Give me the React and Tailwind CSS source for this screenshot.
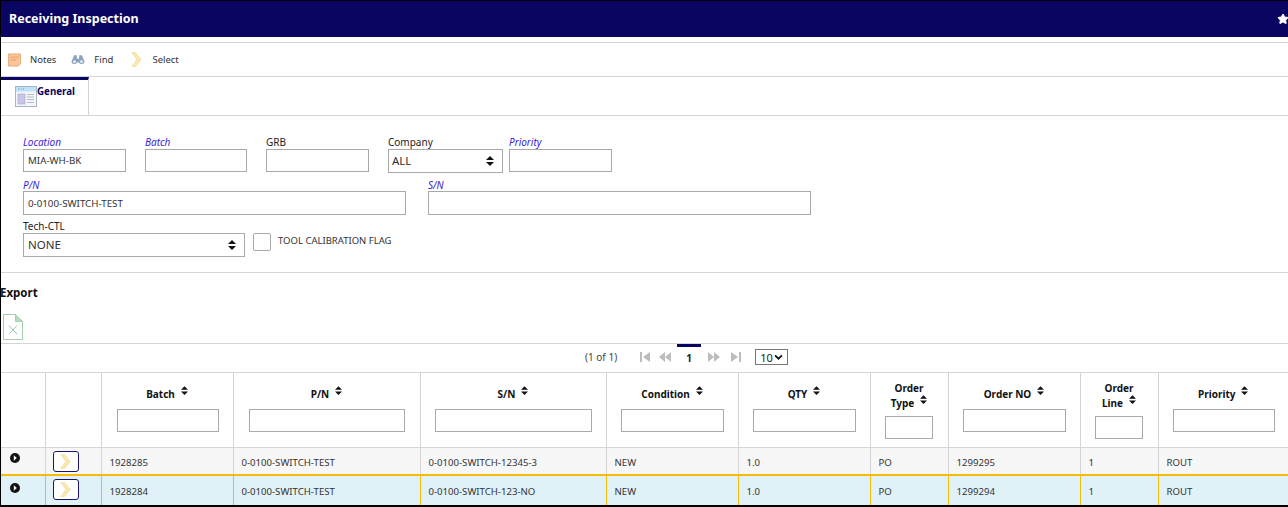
import { Star } from 'lucide-react'

const columns = [
  { w: 'w-[44px]' },
  { w: 'w-[56px]' },
  { w: 'w-[132px]', label: 'Batch', input: 'ml-[2px] w-[102px]' },
  { w: 'w-[187px]', label: 'P/N', input: 'ml-px w-[156px]' },
  { w: 'w-[186px]', label: 'S/N', input: 'w-[157px]' },
  { w: 'w-[132px]', label: 'Condition', input: 'w-[103px]' },
  { w: 'w-[132px]', label: 'QTY', input: 'w-[103px]' },
  { w: 'w-[78px]', label: 'Order', label2: 'Type', input: 'w-[48px]' },
  { w: 'w-[132px]', label: 'Order NO', input: 'w-[103px]' },
  { w: 'w-[78px]', label: 'Order', label2: 'Line', input: 'w-[48px]' },
  { w: 'w-[130px]', label: 'Priority', input: 'ml-[2px] w-[102px]' },
]

const rows = [
  ['1928285', '0-0100-SWITCH-TEST', '0-0100-SWITCH-12345-3', 'NEW', '1.0', 'PO', '1299295', '1', 'ROUT'],
  ['1928284', '0-0100-SWITCH-TEST', '0-0100-SWITCH-123-NO', 'NEW', '1.0', 'PO', '1299294', '1', 'ROUT'],
]

function SortIcon({ className = '' }) {
  return (
    <svg viewBox="0 0 8 10" className={`inline-block h-[9px] w-[7px] ${className}`}>
      <path d="M4 0L8 4H0z M0 6H8L4 10z" fill="#111" />
    </svg>
  )
}

function Chevron({ className = '' }) {
  return (
    <svg viewBox="0 0 12 16" className={className}>
      <path d="M1 0.5H5L11 8L5 15.5H1L6.5 8z" fill="#fce8ad" stroke="#eed690" strokeWidth="0.7" />
    </svg>
  )
}

function Field({ label, italic, value, className, inputClass = 'h-[23px]' }) {
  return (
    <div className={className}>
      <label className={`block h-[13px] text-[10px] leading-[13px] ${italic ? 'italic text-[#3a22d8]' : 'text-[#222]'}`}>{label}</label>
      <input readOnly value={value || ''} className={`block w-full border border-[#a9a9a9] bg-white px-1 text-[9.75px] text-[#333] outline-none ${inputClass}`} />
    </div>
  )
}

function SelectBox({ label, value, className, pad = 'pl-[3px]' }) {
  return (
    <div className={className}>
      <label className="block h-[13px] text-[10px] leading-[13px] text-[#222]">{label}</label>
      <div className={`flex h-[24px] items-center justify-between border border-[#a9a9a9] bg-white pr-2 text-[11.5px] text-[#333] ${pad}`}>
        <span>{value}</span>
        <SortIcon className="!h-[10px] !w-[8px]" />
      </div>
    </div>
  )
}

function PagerIcon({ d, className = '' }) {
  return (
    <svg viewBox="0 0 12 10" className={`h-[10px] w-[12px] ${className}`}>
      <path d={d} fill="#bdbdbd" />
    </svg>
  )
}

export default function App() {
  return (
    <div className="h-[507px] w-[1288px] overflow-hidden border-l border-t border-black bg-white font-['Noto_Sans','Open_Sans',sans-serif] text-[#222]">
      {/* title bar */}
      <div className="flex h-[36px] items-center justify-between bg-[#0a0560] pl-2 text-white">
        <h1 className="text-[12.5px] font-bold">Receiving Inspection</h1>
        <Star className="mr-[-1px] h-[12px] w-[12px] fill-white text-white" />
      </div>

      {/* toolbar */}
      <div className="mt-[5px] flex h-[35px] items-center border-y border-[#d5d5d5] text-[9.5px] text-[#333]">
        <svg viewBox="0 0 14 14" className="ml-[7px] h-[14px] w-[13px]">
          <path d="M0.5 0.5H13.5V11L11 13.5H0.5z" fill="#fbc596" stroke="#e8a877" />
          <path d="M2.5 4H11.5M2.5 7H9" stroke="#e29a66" strokeWidth="1" />
        </svg>
        <span className="ml-[9px] mt-px">Notes</span>
        <svg viewBox="0 0 16 12" className="ml-[15px] h-[11px] w-[14px]">
          <path d="M3.5 1H6.5L7 5H9L9.5 1H12.5L15.5 8.5A3.5 3.5 0 0 1 9 9.5H7A3.5 3.5 0 0 1 0.5 8.5z" fill="#8ea3bd" />
          <circle cx="4" cy="8.6" r="1.7" fill="#e4eaf1" />
          <circle cx="12" cy="8.6" r="1.7" fill="#e4eaf1" />
        </svg>
        <span className="ml-[9px] mt-px">Find</span>
        <Chevron className="ml-[18px] h-[15px] w-[11px]" />
        <span className="ml-[10px] mt-px">Select</span>
      </div>

      {/* tabs */}
      <div className="flex h-[39px] border-b border-[#d5d5d5]">
        <div className="flex w-[88px] border-r border-t-[3px] border-r-[#d5d5d5] border-t-[#0a0560] pl-[14px] pt-[6px]">
          <svg viewBox="0 0 22 22" className="h-[22px] w-[22px]">
            <rect x="0.5" y="0.5" width="21" height="20" fill="#f3f5f8" stroke="#a8b3c4" />
            <rect x="1" y="1" width="20" height="4.5" fill="#bfe2fb" />
            <path d="M3 3H4M5.5 3H6.5M8 3H9" stroke="#7d93ad" strokeWidth="1" />
            <rect x="3" y="8" width="7" height="10" fill="#cbc5e6" stroke="#a9a3cc" strokeWidth="0.6" />
            <path d="M12 8.5H19M12 11H19M12 13.5H19M12 16.5H19" stroke="#b5bcc8" strokeWidth="1" />
          </svg>
          <span className="-mt-px text-[9.75px] font-bold text-[#0a0560]">General</span>
        </div>
      </div>

      {/* search form */}
      <div className="h-[157px] border-b border-[#d5d5d5] pl-[22px] pt-[20px]">
        <div className="flex">
          <Field label="Location" italic value="MIA-WH-BK" className="w-[103px]" />
          <Field label="Batch" italic className="ml-[19px] w-[102px]" />
          <Field label="GRB" className="ml-[19px] w-[103px]" />
          <SelectBox label="Company" value="ALL" className="ml-[19px] w-[115px]" />
          <Field label="Priority" italic className="ml-[6px] w-[103px]" />
        </div>
        <div className="mt-[6px] flex">
          <Field label="P/N" italic value="0-0100-SWITCH-TEST" inputClass="-mt-px h-[24px]" className="w-[383px]" />
          <Field label="S/N" italic inputClass="-mt-px h-[24px]" className="ml-[22px] w-[383px]" />
        </div>
        <div className="mt-[5px] flex">
          <SelectBox label="Tech-CTL" value="NONE" pad="pl-1" className="w-[222px]" />
          <input type="checkbox" readOnly className="ml-[8px] mt-[13px] h-[18px] w-[18px] appearance-none rounded-[2px] border border-[#a9a9a9] bg-white" />
          <span className="ml-[7px] mt-[13px] text-[9.5px] leading-[15px] text-[#333]">TOOL CALIBRATION FLAG</span>
        </div>
      </div>

      {/* export */}
      <div className="h-[71px] border-b border-[#d5d5d5]">
        <div className="-ml-px pt-[12px] text-[11.5px] font-bold leading-[16px] text-[#111]">Export</div>
        <svg viewBox="0 0 20 26" className="ml-[2px] mt-[13px] h-[26px] w-[20px]">
          <path d="M0.5 0.5H12.5L19.5 7.5V25.5H0.5z" fill="#fff" stroke="#a5cdb0" />
          <path d="M12.5 0.5V7.5H19.5z" fill="#b9d9c0" stroke="#a5cdb0" />
          <path d="M6 11.5L14 20M14 11.5L6 20" stroke="#9ec3ab" strokeWidth="1" />
        </svg>
      </div>

      {/* paginator */}
      <div className="flex h-[29px] items-start border-b border-[#d5d5d5] pl-[584px] text-[10px] text-[#444]">
        <span className="mt-[7px] leading-[13px]">(1 of 1)</span>
        <PagerIcon className="ml-[22px] mt-[8px]" d="M1 0H3V10H1z M11 0V10L4 5z" />
        <PagerIcon className="ml-[8px] mt-[8px]" d="M6 0V10L0 5z M12 0V10L6 5z" />
        <div className="ml-[6px] h-[28px] w-[24px] border-t-[3px] border-[#0a0560] pt-[4px] text-center text-[10px] font-bold leading-[14px] text-[#222]">1</div>
        <PagerIcon className="ml-[7px] mt-[8px]" d="M0 0L6 5L0 10z M6 0L12 5L6 10z" />
        <PagerIcon className="ml-[10px] mt-[8px]" d="M1 0L8 5L1 10z M9 0H11V10H9z" />
        <div className="ml-[13px] mt-[5px] flex h-[16px] w-[33px] items-center justify-between border border-[#777] px-1 text-[11px] leading-none text-[#222]">
          <span>10</span>
          <svg viewBox="0 0 10 7" className="h-[6px] w-[9px]">
            <path d="M1 1.5L5 5.5L9 1.5" fill="none" stroke="#111" strokeWidth="2" />
          </svg>
        </div>
      </div>

      {/* results table */}
      <table className="w-[1287px] table-fixed border-collapse">
        <colgroup>
          {columns.map((c, i) => (
            <col key={i} className={c.w} />
          ))}
        </colgroup>
        <thead>
          <tr className="h-[74px]">
            {columns.map((c, i) => (
              <th key={i} className="border-b border-r border-[#d5d5d5] p-0 align-top text-[10px] font-bold text-[#111] last:border-r-0">
                {c.label && (
                  <div className="flex h-[73px] flex-col items-center">
                    <div className={`${c.label2 ? 'pt-[8px]' : 'pt-[13px]'} leading-[14px]`}>
                      {c.label2 ? (
                        <>
                          <div>{c.label}</div>
                          <div>{c.label2}<SortIcon className="ml-[6px] align-[3px]" /></div>
                        </>
                      ) : (
                        <div className="h-[14px]">{c.label}<SortIcon className="ml-[6px] align-[3px]" /></div>
                      )}
                    </div>
                    <input readOnly className={`${c.input} ${c.label2 ? 'mt-[6px]' : 'mt-[9px]'} block h-[23px] shrink-0 border border-[#a9a9a9] bg-white outline-none`} />
                  </div>
                )}
              </th>
            ))}
          </tr>
        </thead>
        <tbody>
          {rows.map((row, r) => {
            const active = r === 1
            const edge = active ? 'border-[#f5bd0a]' : 'border-[#d5d5d5]'
            const rowEdge = active ? 'border-t-2 border-t-[#f5bd0a] border-b-2 border-b-black' : ''
            return (
              <tr key={r} className={active ? 'h-[31px] bg-[#e1f1f8]' : 'h-[28px] bg-[#f7f7f7]'}>
                <td className={`border-r p-0 align-top ${edge} ${rowEdge}`}>
                  <svg viewBox="0 0 10 10" className={`ml-[9px] h-[10px] w-[10px] ${active ? 'mt-[7px]' : 'mt-[5px]'}`}>
                    <circle cx="5" cy="5" r="5" fill="#111" />
                    <path d="M3.8 2.2L6.8 5L3.8 7.8z" fill="#fff" />
                  </svg>
                </td>
                <td className={`border-r p-0 align-top ${edge} ${rowEdge}`}>
                  <div className="ml-[7px] mt-[3px] flex h-[21px] w-[26px] items-center justify-center rounded-[3px] border border-[#1a1570] bg-white">
                    <Chevron className="h-[15px] w-[11px]" />
                  </div>
                </td>
                {row.map((cell, i) => (
                  <td key={i} className={`overflow-hidden whitespace-nowrap border-r p-0 pl-[8px] pt-[4px] align-middle text-[9.6px] text-[#333] last:border-r-0 ${edge} ${rowEdge}`}>
                    {cell}
                  </td>
                ))}
              </tr>
            )
          })}
        </tbody>
      </table>
    </div>
  )
}
